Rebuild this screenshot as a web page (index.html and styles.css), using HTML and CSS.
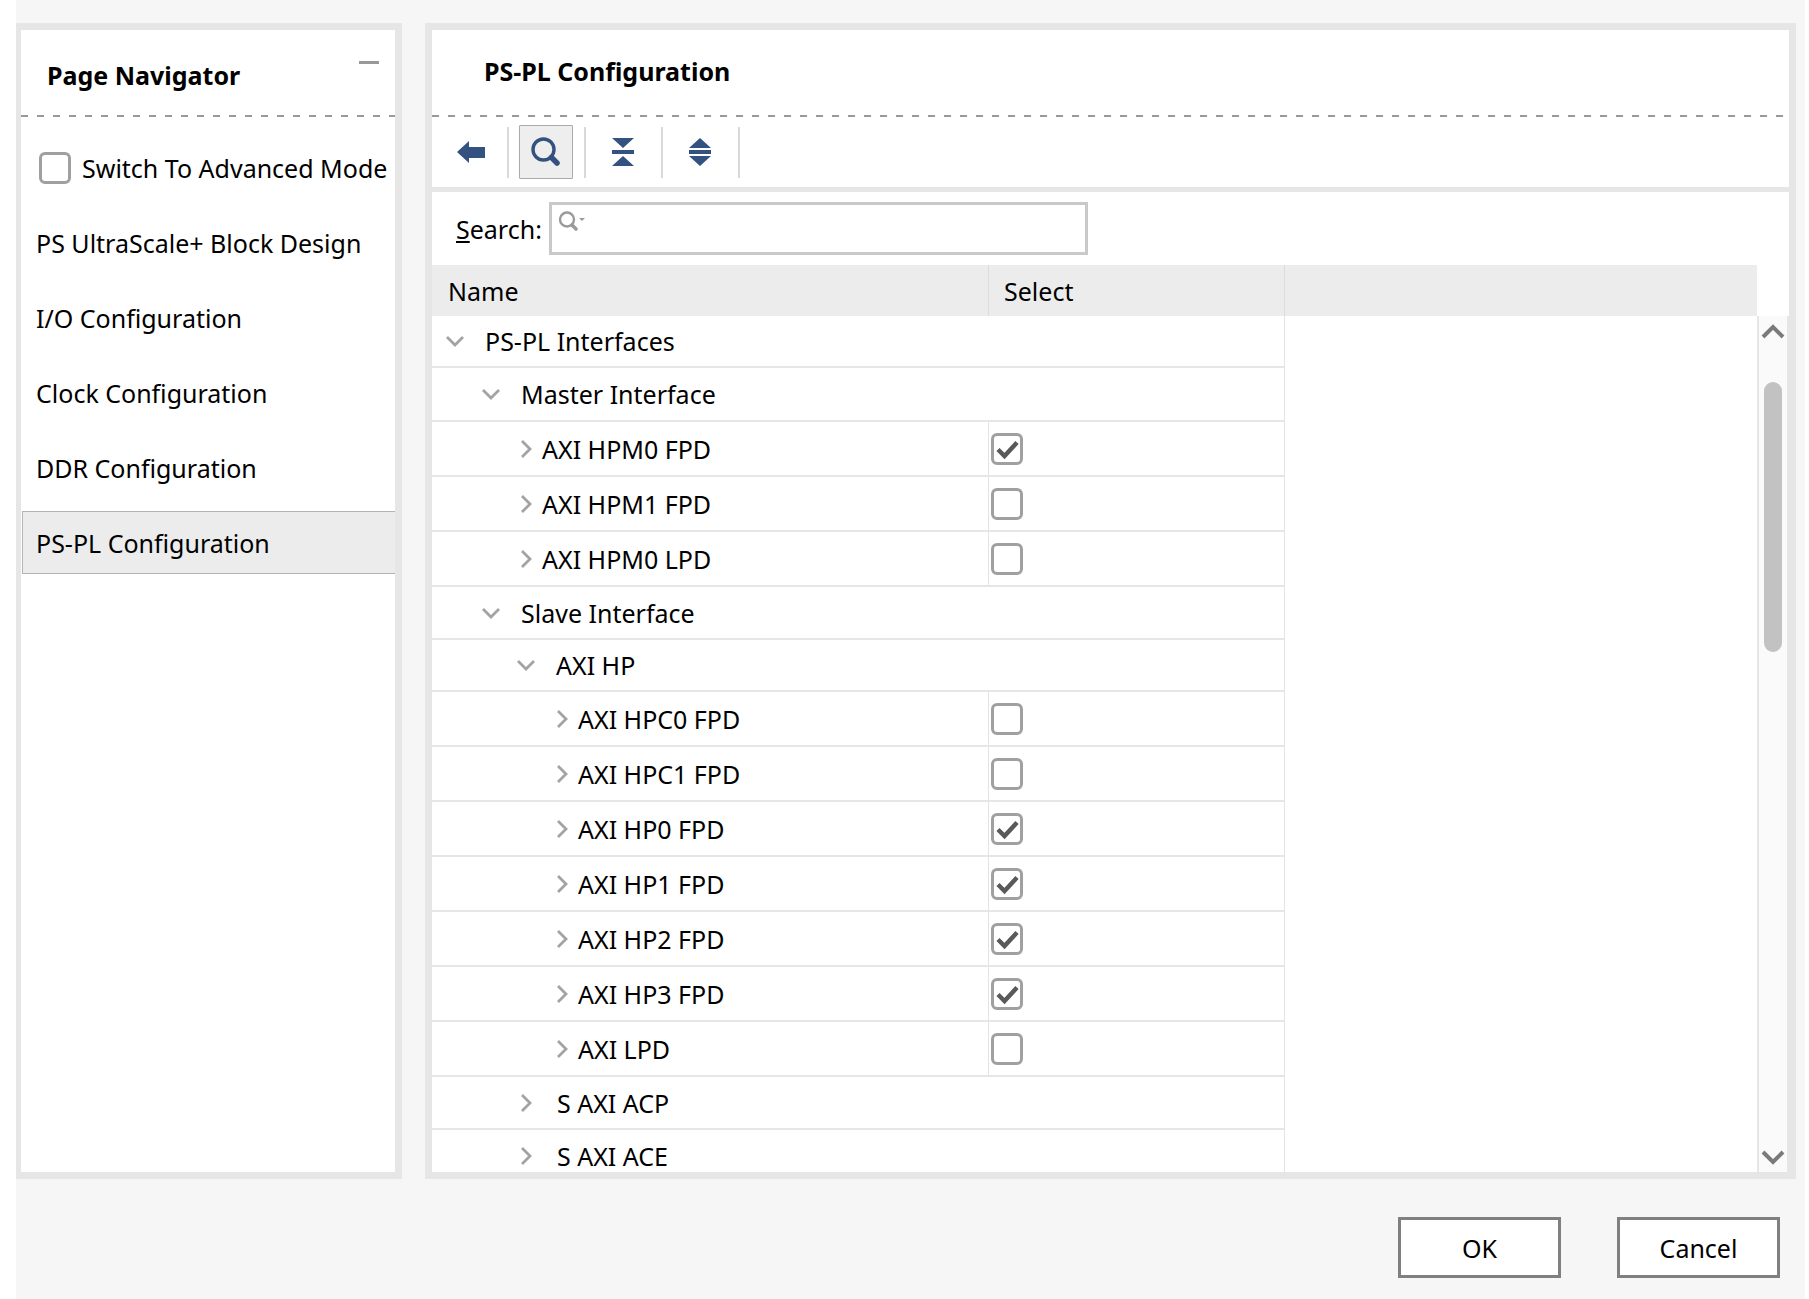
FILE: index.html
```html
<!DOCTYPE html>
<html lang="en">
<head>
<meta charset="utf-8">
<title>PS-PL Configuration</title>
<link rel="stylesheet" href="styles.css">
</head>
<body>
<svg class="defs" width="0" height="0" aria-hidden="true">
  <symbol id="down" viewBox="0 0 20 12"><path d="M2 2 L10 10 L18 2" fill="none" stroke="#a3a3a3" stroke-width="2.8"/></symbol>
  <symbol id="right" viewBox="0 0 12 20"><path d="M2 2 L10 10 L2 18" fill="none" stroke="#a3a3a3" stroke-width="2.8"/></symbol>
  <symbol id="tick" viewBox="0 0 32 32"><path d="M7 16.5 L13.5 23 L26 9.5" fill="none" stroke="#595959" stroke-width="4.4"/></symbol>
</svg>
<div class="app">
  <div class="panels">
    <section class="panel nav">
      <header class="nav-head">
        <h2 class="nav-title">Page Navigator</h2>
        <span class="minimize"></span>
      </header>
      <div class="dash"></div>
      <label class="switch"><span class="box"></span><span class="switch-text">Switch To Advanced Mode</span></label>
      <ul class="nav-list">
        <li class="nav-item">PS UltraScale+ Block Design</li>
        <li class="nav-item">I/O Configuration</li>
        <li class="nav-item">Clock Configuration</li>
        <li class="nav-item">DDR Configuration</li>
        <li class="nav-item selected">PS-PL Configuration</li>
      </ul>
    </section>
    <section class="panel main">
      <header class="main-head"><h2 class="main-title">PS-PL Configuration</h2></header>
      <div class="dash dash-main"></div>
      <div class="toolbar">
        <span class="tool tool-back">
          <svg width="28" height="22" viewBox="0 0 28 22"><path d="M0 11 L12 0 V6 H28 V17 H12 V22 Z" fill="#34527f"/></svg>
        </span>
        <span class="tool-sep"></span>
        <span class="tool tool-active">
          <svg width="30" height="30" viewBox="0 0 30 30"><circle cx="12.5" cy="12.5" r="10.5" fill="none" stroke="#34527f" stroke-width="3.4"/><path d="M20.5 20.5 L26 26" stroke="#34527f" stroke-width="5.5" stroke-linecap="round"/></svg>
        </span>
        <span class="tool-sep"></span>
        <span class="tool">
          <svg width="24" height="28" viewBox="0 0 24 28"><path d="M1 0 H23 L12 10 Z M1 12 H23 V16 H1 Z M12 18 L23 28 H1 Z" fill="#34527f"/></svg>
        </span>
        <span class="tool-sep"></span>
        <span class="tool">
          <svg width="22" height="28" viewBox="0 0 22 28"><path d="M11 0 L22 10 H0 Z M0 12 H22 V16 H0 Z M0 18 H22 L11 28 Z" fill="#34527f"/></svg>
        </span>
        <span class="tool-sep"></span>
      </div>
      <div class="rule"></div>
      <div class="search">
        <label class="search-label"><u>S</u>earch:</label>
        <div class="search-input">
          <svg width="28" height="22" viewBox="0 0 28 22"><circle cx="9" cy="8.5" r="7" fill="none" stroke="#9a9a9a" stroke-width="2.4"/><path d="M14 14 L18 18" stroke="#9a9a9a" stroke-width="3.6" stroke-linecap="round"/><path d="M21 7 H27 L24 10 Z" fill="#9a9a9a"/></svg>
        </div>
      </div>
      <div class="thead">
        <div class="th th-name">Name</div>
        <div class="th th-select">Select</div>
      </div>
      <div class="tbody-wrap">
        <div class="tree">
          <div class="row group h52 l0"><svg class="chev-d"><use href="#down"/></svg><span>PS-PL Interfaces</span></div>
          <div class="row group h54 l1"><svg class="chev-d"><use href="#down"/></svg><span>Master Interface</span></div>
          <div class="row item h55"><div class="name l2"><svg class="chev-r"><use href="#right"/></svg><span>AXI HPM0 FPD</span></div><div class="sel"><span class="box"><svg class="tick"><use href="#tick"/></svg></span></div></div>
          <div class="row item h55"><div class="name l2"><svg class="chev-r"><use href="#right"/></svg><span>AXI HPM1 FPD</span></div><div class="sel"><span class="box"></span></div></div>
          <div class="row item h55"><div class="name l2"><svg class="chev-r"><use href="#right"/></svg><span>AXI HPM0 LPD</span></div><div class="sel"><span class="box"></span></div></div>
          <div class="row group h53 l1"><svg class="chev-d"><use href="#down"/></svg><span>Slave Interface</span></div>
          <div class="row group h52 l2g"><svg class="chev-d"><use href="#down"/></svg><span>AXI HP</span></div>
          <div class="row item h55"><div class="name l3"><svg class="chev-r"><use href="#right"/></svg><span>AXI HPC0 FPD</span></div><div class="sel"><span class="box"></span></div></div>
          <div class="row item h55"><div class="name l3"><svg class="chev-r"><use href="#right"/></svg><span>AXI HPC1 FPD</span></div><div class="sel"><span class="box"></span></div></div>
          <div class="row item h55"><div class="name l3"><svg class="chev-r"><use href="#right"/></svg><span>AXI HP0 FPD</span></div><div class="sel"><span class="box"><svg class="tick"><use href="#tick"/></svg></span></div></div>
          <div class="row item h55"><div class="name l3"><svg class="chev-r"><use href="#right"/></svg><span>AXI HP1 FPD</span></div><div class="sel"><span class="box"><svg class="tick"><use href="#tick"/></svg></span></div></div>
          <div class="row item h55"><div class="name l3"><svg class="chev-r"><use href="#right"/></svg><span>AXI HP2 FPD</span></div><div class="sel"><span class="box"><svg class="tick"><use href="#tick"/></svg></span></div></div>
          <div class="row item h55"><div class="name l3"><svg class="chev-r"><use href="#right"/></svg><span>AXI HP3 FPD</span></div><div class="sel"><span class="box"><svg class="tick"><use href="#tick"/></svg></span></div></div>
          <div class="row item h55"><div class="name l3"><svg class="chev-r"><use href="#right"/></svg><span>AXI LPD</span></div><div class="sel"><span class="box"></span></div></div>
          <div class="row group h53 l2s"><svg class="chev-r"><use href="#right"/></svg><span>S AXI ACP</span></div>
          <div class="row group h53 l2s"><svg class="chev-r"><use href="#right"/></svg><span>S AXI ACE</span></div>
        </div>
        <div class="blank"></div>
        <div class="scrollbar">
          <svg class="arrow" width="24" height="16" viewBox="0 0 24 16"><path d="M2 14 L12 4 L22 14" fill="none" stroke="#7a7a7a" stroke-width="4"/></svg>
          <div class="thumb"></div>
          <svg class="arrow arrow-down" width="24" height="16" viewBox="0 0 24 16"><path d="M2 2 L12 12 L22 2" fill="none" stroke="#7a7a7a" stroke-width="4"/></svg>
        </div>
      </div>
    </section>
  </div>
  <footer class="footer">
    <button class="btn">OK</button>
    <button class="btn">Cancel</button>
  </footer>
</div>
</body>
</html>
```
FILE: styles.css
```css
* { box-sizing: border-box; }
html, body { margin: 0; padding: 0; background: #fff; }
body {
  font-family: "Noto Sans", "Open Sans", sans-serif;
  font-size: 25px;
  color: #000;
  overflow: hidden;
}
.defs { position: absolute; }
.app {
  width: 1789px;
  height: 1299px;
  margin-left: 16px;
  padding-top: 23px;
  background: #f6f6f6;
}
.panels { display: flex; gap: 23px; height: 1156px; }
.panel {
  background: #fff;
  border: 7px solid #e6e6e6;
  display: flex;
  flex-direction: column;
  overflow: hidden;
}
.nav { width: 386px; border-left-width: 5px; }
.main { width: 1371px; }

.dash {
  height: 2px;
  flex: none;
  background: repeating-linear-gradient(90deg, #999 0 7px, transparent 7px 16px);
}
.dash-main { margin-right: 6px; }

.nav-head { height: 85px; flex: none; display: flex; position: relative; padding: 28px 0 0 26px; }
.nav-title, .main-title { margin: 0; font-size: 25px; font-weight: 700; line-height: 34px; }
.minimize { position: absolute; left: 338px; top: 31px; width: 20px; height: 3px; background: #999; }

.switch { display: flex; align-items: center; gap: 11px; padding: 34px 0 0 18px; white-space: nowrap; overflow: hidden; height: 68px; flex: none; }
.box {
  display: block;
  flex: none;
  width: 32px;
  height: 32px;
  border: 3px solid #a0a0a0;
  border-radius: 6px;
  background: #fff;
  position: relative;
}
.switch-text { line-height: 34px; }

.nav-list { list-style: none; margin: 0; padding: 26px 0 0 1px; }
.nav-item {
  height: 63px;
  margin-bottom: 12px;
  padding-left: 13px;
  display: flex;
  align-items: center;
  border: 1px solid transparent;
  border-right: 0;
  white-space: nowrap;
}
.nav-item.selected { background: #ececec; border-color: #b3b3b3; }

.main-head { height: 85px; flex: none; padding: 24px 0 0 52px; }

.toolbar { height: 70px; flex: none; display: flex; align-items: center; padding-left: 0; }
.tool { width: 54px; height: 54px; flex: none; display: flex; align-items: center; justify-content: center; border: 1px solid transparent; margin: 0 11px 0 10px; }
.tool-back { margin: 0 10px 0 0; width: 65px; padding-left: 12px; }
.tool-active { background: #eee; border-color: #aaa; border-radius: 1px; }
.tool-sep { width: 2px; height: 51px; background: #d9d9d9; flex: none; }
.rule { height: 5px; flex: none; background: #e6e6e6; }

.search { height: 73px; flex: none; display: flex; align-items: center; padding: 0 0 0 24px; gap: 9px; }
.search-label { width: 84px; white-space: nowrap; }
.search-input {
  width: 539px;
  height: 53px;
  margin-top: 0;
  border: 3px solid #c9c9c9;
  background: #fff;
  padding: 6px 0 0 6px;
  display: flex;
  align-items: flex-start;
}
.thead { height: 51px; width: 1325px; flex: none; display: flex; background: #ececec; }
.th { height: 51px; display: flex; align-items: center; border-right: 1px solid #dcdcdc; }
.th-name { width: 557px; padding-left: 16px; }
.th-select { width: 296px; padding-left: 15px; }

.tbody-wrap { display: flex; flex: 1; min-height: 0; overflow: hidden; }
.tree { width: 853px; flex: none; border-right: 1px solid #e3e3e3; overflow: hidden; }
.blank { width: 472px; flex: none; }

.row { display: flex; align-items: center; border-bottom: 2px solid #e6e6e6; white-space: nowrap; }
.h52 { height: 52px; }
.h53 { height: 53px; }
.h54 { height: 54px; }
.h55 { height: 55px; }
.chev-d { width: 20px; height: 12px; flex: none; }
.chev-r { width: 12px; height: 20px; flex: none; }
.l0 { padding-left: 13px; }
.l0 .chev-d { margin-right: 20px; }
.l1 { padding-left: 49px; }
.l1 .chev-d { margin-right: 20px; }
.l2g { padding-left: 84px; }
.l2g .chev-d { margin-right: 20px; }
.l2s { padding-left: 88px; }
.l2s .chev-r { margin-right: 25px; }
.name { width: 556px; height: 100%; display: flex; align-items: center; flex: none; }
.l2 { padding-left: 88px; }
.l2 .chev-r { margin-right: 10px; }
.l3 { padding-left: 124px; }
.l3 .chev-r { margin-right: 10px; }
.sel { height: 100%; flex: 1; border-left: 1px solid #e3e3e3; padding-left: 2px; display: flex; align-items: center; }
.tick { position: absolute; left: -3px; top: -3px; width: 32px; height: 32px; }

.scrollbar {
  width: 32px;
  flex: none;
  background: #fafafa;
  border-left: 2px solid #e6e6e6;
  border-right: 2px solid #e6e6e6;
  display: flex;
  flex-direction: column;
  align-items: center;
  position: relative;
}
.arrow { margin-top: 7px; flex: none; }
.arrow-down { margin-top: auto; margin-bottom: 6px; }
.thumb { width: 18px; height: 270px; margin-top: 43px; background: #c2c2c2; border-radius: 9px; flex: none; }

.footer { display: flex; justify-content: flex-end; gap: 56px; padding: 38px 25px 0 0; }
.btn {
  width: 163px;
  height: 61px;
  background: #fff;
  border: 3px solid #808080;
  font: inherit;
  color: #000;
  padding: 0;
}
```
